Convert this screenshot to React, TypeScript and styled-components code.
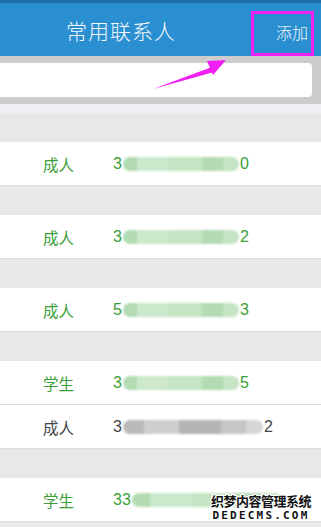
import styled, { createGlobalStyle } from 'styled-components';

const GlobalStyle = createGlobalStyle`
  html, body {
    margin: 0;
    padding: 0;
    background: #e8e8e8;
  }
  body {
    font-family: "Noto Sans CJK SC", "Liberation Sans", sans-serif;
  }
`;

const Screen = styled.div`
  position: relative;
  width: 321px;
  height: 527px;
  overflow: hidden;
  background: #e8e8e8;
`;

const Header = styled.header`
  display: flex;
  align-items: stretch;
  height: 53px;
  border-top: 3px solid #1c6ea6;
  background: #2a8fd0;
  color: #fff;
`;

const Title = styled.h1`
  flex: 1;
  margin: 0;
  padding-right: 9px;
  display: flex;
  align-items: center;
  justify-content: center;
  font-size: 21px;
  font-weight: 300;
  letter-spacing: 1px;
  color: #f4f9fd;
`;

const AddButton = styled.button`
  align-self: flex-end;
  box-sizing: border-box;
  width: 63px;
  height: 45px;
  margin-right: 7px;
  padding: 0 3px 4px 0;
  display: flex;
  align-items: center;
  justify-content: flex-end;
  border: 3px solid #f21ff2;
  background: transparent;
  color: #eef6fc;
  font-family: inherit;
  font-size: 16px;
  font-weight: 300;
`;

const SearchBar = styled.div`
  display: flex;
  padding: 7px 9px 7px 0;
  height: 34px;
  background: #cdcdcd;
`;

const SearchInput = styled.div`
  flex: 1;
  margin-left: -6px;
  background: #fff;
  border-radius: 4px;
`;

const Strip = styled.div`
  height: 9px;
  background: #efeff3;
`;

const Spacer = styled.div`
  height: 29px;
  background: #e8e8e8;
`;

const Row = styled.div<{ $tone: 'green' | 'gray' }>`
  display: flex;
  align-items: center;
  height: 43px;
  border-bottom: 1px solid #dedede;
  background: #fff;
  font-size: 15.5px;
  color: ${(p) => (p.$tone === 'green' ? '#3a9f3a' : '#454545')};
`;

const Kind = styled.span`
  width: 70px;
  padding-left: 43px;
`;

const Number = styled.span`
  display: flex;
  align-items: center;
  font-family: "Liberation Sans", sans-serif;
  font-size: 16px;
`;

const Blur = styled.span<{ $tone: 'green' | 'gray' }>`
  display: inline-block;
  height: 14px;
  margin: 0 1px;
  border-radius: 7px;
  filter: blur(0.8px);
  background: ${(p) =>
    p.$tone === 'green'
      ? 'linear-gradient(90deg, #b2dbb2 0 12%, #cbe8cb 12% 40%, #c5e5c5 40% 68%, #b3dbb3 68% 86%, #c4e4c4 86%)'
      : 'linear-gradient(90deg, #b9b9b9 0 15%, #cfcfcf 15% 40%, #b5b5b5 40% 70%, #c6c6c6 70% 88%, #d6d6d6 88%)'};
`;

const Arrow = styled.svg`
  position: absolute;
  left: 0;
  top: 0;
  pointer-events: none;
`;

const Watermark = styled.div`
  position: absolute;
  right: 10px;
  bottom: 6px;
  display: flex;
  flex-direction: column;
  align-items: center;
  color: #111;
  font-weight: 700;
  line-height: 1;
  text-shadow: 1px 0 #fff, -1px 0 #fff, 0 1px #fff, 0 -1px #fff, 1px 1px #fff, -1px -1px #fff, 1px -1px #fff, -1px 1px #fff;
`;

const MarkCn = styled.span`
  font-size: 13px;
  letter-spacing: -0.5px;
`;

const MarkEn = styled.span`
  margin-top: 3px;
  font-family: "DejaVu Sans Mono", monospace;
  font-size: 11px;
  letter-spacing: 2.2px;
`;

type Contact = { kind: string; first: string; last: string; blur: number; tone: 'green' | 'gray'; group: boolean };

const contacts: Contact[] = [
  { kind: '成人', first: '3', last: '0', blur: 116, tone: 'green', group: true },
  { kind: '成人', first: '3', last: '2', blur: 116, tone: 'green', group: true },
  { kind: '成人', first: '5', last: '3', blur: 116, tone: 'green', group: true },
  { kind: '学生', first: '3', last: '5', blur: 116, tone: 'green', group: true },
  { kind: '成人', first: '3', last: '2', blur: 140, tone: 'gray', group: false },
  { kind: '学生', first: '33', last: '', blur: 150, tone: 'green', group: true },
];

export default function App() {
  return (
    <Screen>
      <GlobalStyle />
      <Header>
        <Title>常用联系人</Title>
        <AddButton>添加</AddButton>
      </Header>
      <SearchBar>
        <SearchInput />
      </SearchBar>
      <Strip />
      {contacts.map((c, i) => (
        <div key={i}>
          {c.group && <Spacer />}
          <Row $tone={c.tone}>
            <Kind>{c.kind}</Kind>
            <Number>
              {c.first}
              <Blur $tone={c.tone} style={{ width: c.blur }} />
              {c.last}
            </Number>
          </Row>
        </div>
      ))}
      <Arrow width="321" height="527" viewBox="0 0 321 527">
        <polygon points="153,89 212,67 214,72" fill="#f21ff2" />
        <polygon points="226,60 207,61 213,75" fill="#f21ff2" />
      </Arrow>
      <Watermark>
        <MarkCn>织梦内容管理系统</MarkCn>
        <MarkEn>DEDECMS.COM</MarkEn>
      </Watermark>
    </Screen>
  );
}
